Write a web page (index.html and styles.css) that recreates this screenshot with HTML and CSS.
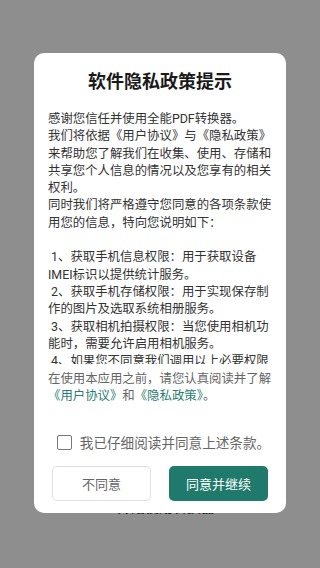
FILE: index.html
```html
<!DOCTYPE html>
<html lang="zh-CN">
<head>
<meta charset="utf-8">
<title>软件隐私政策提示</title>
<link rel="stylesheet" href="styles.css">
</head>
<body>
<div class="screen">
  <div class="page">
    <p class="page-text">开始使用转换器</p>
  </div>
  <div class="dialog">
    <h1 class="title">软件隐私政策提示</h1>
    <div class="scroll">
      <p class="para">感谢您信任并使用全能PDF转换器。<br>我们将依据《用户协议》与《隐私政策》<br>来帮助您了解我们在收集、使用、存储和<br>共享您个人信息的情况以及您享有的相关<br>权利。<br>同时我们将严格遵守您同意的各项条款使<br>用您的信息，特向您说明如下：<br>&nbsp;<br>&nbsp;1、获取手机信息权限：用于获取设备<br>IMEI标识以提供统计服务。<br>&nbsp;2、获取手机存储权限：用于实现保存制<br>作的图片及选取系统相册服务。<br>&nbsp;3、获取相机拍摄权限：当您使用相机功<br>能时，需要允许启用相机服务。<br>&nbsp;4、如果您不同意我们调用以上必要权限</p>
    </div>
    <p class="notice">在使用本应用之前，请您认真阅读并了解<br><span class="link">《用户协议》</span>和<span class="link">《隐私政策》</span>。</p>
    <label class="agree">
      <span class="box"></span>
      <span class="agree-text">我已仔细阅读并同意上述条款。</span>
    </label>
    <div class="actions">
      <button class="btn btn-ghost">不同意</button>
      <button class="btn btn-primary">同意并继续</button>
    </div>
  </div>
</div>
</body>
</html>
```

FILE: styles.css
```css
* { box-sizing: border-box; }
html, body { margin: 0; padding: 0; }
body {
  font-family: "Roboto", "Noto Sans CJK SC", sans-serif;
  background: #8e8e8e;
}
.screen {
  position: relative;
  width: 320px;
  height: 568px;
  overflow: hidden;
  background: #8e8e8e;
}
.page {
  padding-top: 498px;
  display: flex;
  justify-content: center;
}
.page-text {
  margin: 0 0 0 12px;
  font-size: 14px;
  line-height: 18px;
  font-weight: 700;
  color: #1e1e1e;
}
.dialog {
  position: absolute;
  left: 34px;
  top: 53px;
  width: 252px;
  height: 460px;
  background: #fff;
  border-radius: 10px;
  display: flex;
  flex-direction: column;
  padding: 0 14px;
}
.title {
  margin: 17px 0 0;
  font-size: 18px;
  line-height: 24px;
  font-weight: 700;
  color: #1a1a1a;
  text-align: center;
}
.scroll {
  margin-top: 16px;
  height: 254px;
  overflow: hidden;
}
.para {
  margin: 0;
  font-size: 12.4px;
  line-height: 17.3px;
  color: #333;
  white-space: nowrap;
}
.notice {
  margin: 6px 0 0;
  font-size: 12.4px;
  line-height: 17px;
  color: #666;
  white-space: nowrap;
}
.link { color: #2b7d6f; }
.agree {
  margin-top: 28px;
  height: 20px;
  display: flex;
  align-items: center;
  justify-content: center;
  gap: 8px;
  padding-left: 7px;
}
.box {
  width: 15px;
  height: 15px;
  border: 1.5px solid #777;
  border-radius: 2px;
  flex: none;
}
.agree-text {
  font-size: 13.6px;
  color: #666;
  white-space: nowrap;
}
.actions {
  margin-top: 14px;
  display: flex;
  justify-content: space-between;
  padding: 0 4px;
}
.btn {
  width: 99px;
  height: 35px;
  border-radius: 5px;
  font-family: inherit;
  font-size: 13px;
  padding: 0;
}
.btn-ghost {
  background: #fff;
  border: 1px solid #e0e0e0;
  color: #666;
}
.btn-primary {
  background: #1f7a6b;
  border: none;
  color: #fff;
}
```
